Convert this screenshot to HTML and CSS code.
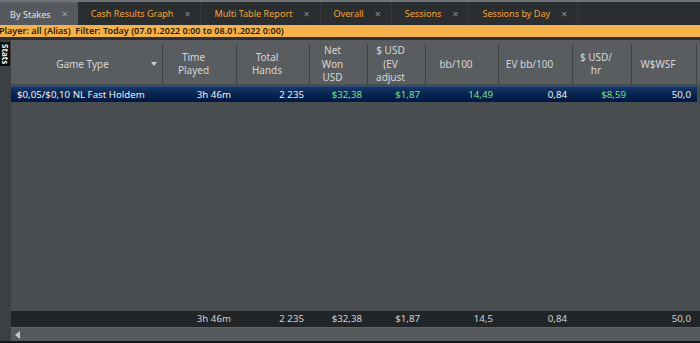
FILE: index.html
```html
<!DOCTYPE html>
<html>
<head>
<meta charset="utf-8">
<link rel="stylesheet" href="styles.css">
</head>
<body>
<div class="app">
  <div class="tabs">
    <div class="tab active"><span>By Stakes</span><span class="x">×</span></div>
    <div class="tab"><span>Cash Results Graph</span><span class="x">×</span></div>
    <div class="tab"><span>Multi Table Report</span><span class="x">×</span></div>
    <div class="tab"><span>Overall</span><span class="x">×</span></div>
    <div class="tab"><span>Sessions</span><span class="x">×</span></div>
    <div class="tab"><span>Sessions by Day</span><span class="x">×</span></div>
  </div>
  <div class="filter">Player: all (Alias)&nbsp; Filter: Today (07.01.2022 0:00 to 08.01.2022 0:00)</div>
  <div class="main">
    <div class="side"><div class="stats">Stats</div></div>
    <div class="grid">
      <div class="head cols">
        <div class="hc first"><span>Game Type</span><span class="sort"></span></div>
        <div class="hc"><span>Time<br>Played</span></div>
        <div class="hc"><span>Total<br>Hands</span></div>
        <div class="hc"><span>Net<br>Won<br>USD</span></div>
        <div class="hc"><span>$ USD<br>(EV<br>adjust</span></div>
        <div class="hc"><span>bb/100</span></div>
        <div class="hc"><span>EV bb/100</span></div>
        <div class="hc"><span>$ USD/<br>hr</span></div>
        <div class="hc"><span>W$WSF</span></div>
        <div class="hc last"></div>
      </div>
      <div class="row cols sel">
        <div class="c left">$0,05/$0,10 NL Fast Holdem</div>
        <div class="c">3h 46m</div>
        <div class="c">2 235</div>
        <div class="c g">$32,38</div>
        <div class="c g">$1,87</div>
        <div class="c g">14,49</div>
        <div class="c">0,84</div>
        <div class="c g">$8,59</div>
        <div class="c">50,0</div>
        <div class="c"></div>
      </div>
      <div class="fill"></div>
      <div class="row cols foot">
        <div class="c left"></div>
        <div class="c">3h 46m</div>
        <div class="c">2 235</div>
        <div class="c">$32,38</div>
        <div class="c">$1,87</div>
        <div class="c">14,5</div>
        <div class="c">0,84</div>
        <div class="c"></div>
        <div class="c">50,0</div>
        <div class="c"></div>
      </div>
      <div class="hscroll">
        <svg class="arrow" width="6" height="8" viewBox="0 0 6 8"><path d="M5 0 L0 4 L5 8 Z" fill="#c8c8c8"/></svg>
        <div class="track"></div>
      </div>
    </div>
  </div>
  <div class="bottom"></div>
</div>
</body>
</html>
```
FILE: styles.css
```css
* { box-sizing: border-box; }
html, body { margin: 0; padding: 0; }
body {
  width: 700px;
  height: 343px;
  overflow: hidden;
  background: #1c1e20;
  font-family: "Noto Sans", "Open Sans", sans-serif;
  font-size: 10px;
}
.app { display: flex; flex-direction: column; height: 343px; }

.tabs {
  height: 25px;
  flex: none;
  display: flex;
  background: #2b2e31;
  border-top: 2px solid #6f7377;
  font-size: 9.1px;
}
.tab {
  display: flex;
  align-items: center;
  gap: 11px;
  padding: 0 10px 0 13px;
  color: #f2a33a;
  border-right: 1px solid #35383b;
  white-space: nowrap;
}
.tab .x { color: #8a8f94; font-size: 10.5px; }
.tab.active {
  background: #55595d;
  color: #e4e4e4;
  padding-left: 10px;
  border-right: none;
  border-top: 1px solid #5f6367;
}
.tab.active .x { color: #a0a4a8; }

.filter {
  height: 12px;
  flex: none;
  background: #f5b24c;
  color: #2b1c05;
  font-size: 9px;
  font-weight: 600;
  line-height: 12px;
  margin-left: -1px;
  white-space: nowrap;
}

.main {
  flex: 1;
  display: flex;
  border-top: 3px solid #2d3033;
  min-height: 0;
}
.side {
  width: 11px;
  flex: none;
  background: #3d4043;
  padding-top: 2px;
}
.stats {
  width: 10px;
  height: 24px;
  background: #0c0c0c;
  color: #f0f0f0;
  writing-mode: vertical-rl;
  font-size: 8px;
  font-weight: 700;
  text-align: center;
  line-height: 10px;
}
.grid {
  flex: 1;
  display: flex;
  flex-direction: column;
  background: #4a4d50;
  min-width: 0;
}
.cols {
  display: grid;
  grid-template-columns: 152px 74px 73px 58px 58px 73px 74px 59px 65px 1fr;
}
.head {
  height: 44px;
  flex: none;
  background: #5a5d60;
  color: #d6d6d6;
  font-size: 10px;
  line-height: 13.5px;
}
.hc {
  display: flex;
  align-items: center;
  justify-content: center;
  text-align: center;
  padding-right: 12px;
  border-right: 1px solid #3f4245;
  margin: 4px 0 1px 0;
  white-space: nowrap;
  position: relative;
}
.hc.first { padding-right: 8px; }
.hc.last { border-right: none; }
.sort {
  position: absolute;
  right: 5px;
  top: 18px;
  width: 0; height: 0;
  border-left: 3.5px solid transparent;
  border-right: 3.5px solid transparent;
  border-top: 4px solid #d0d0d0;
}

.row {
  height: 16px;
  flex: none;
  font-size: 9.7px;
  line-height: 16px;
  white-space: nowrap;
}
.sel {
  margin-top: 2px;
  background: linear-gradient(#173766, #05214d 60%, #021a42);
  color: #eef1f5;
  margin-right: 3px;
  border-top: 1px solid #2a4a78;
}
.c { text-align: right; padding-right: 6px; overflow: hidden; }
.c.left { text-align: left; padding-left: 6px; }
.g { color: #76e092; }

.fill { flex: 1; }
.foot {
  background: #222528;
  color: #cfd2d5;
}
.hscroll {
  height: 14px;
  flex: none;
  display: flex;
  align-items: center;
  background: #56595c;
  border-top: 1px solid #5f6366;
}
.arrow { margin-left: 4px; }
.track { flex: 1; }
.bottom { height: 2px; flex: none; background: #141516; }
```
